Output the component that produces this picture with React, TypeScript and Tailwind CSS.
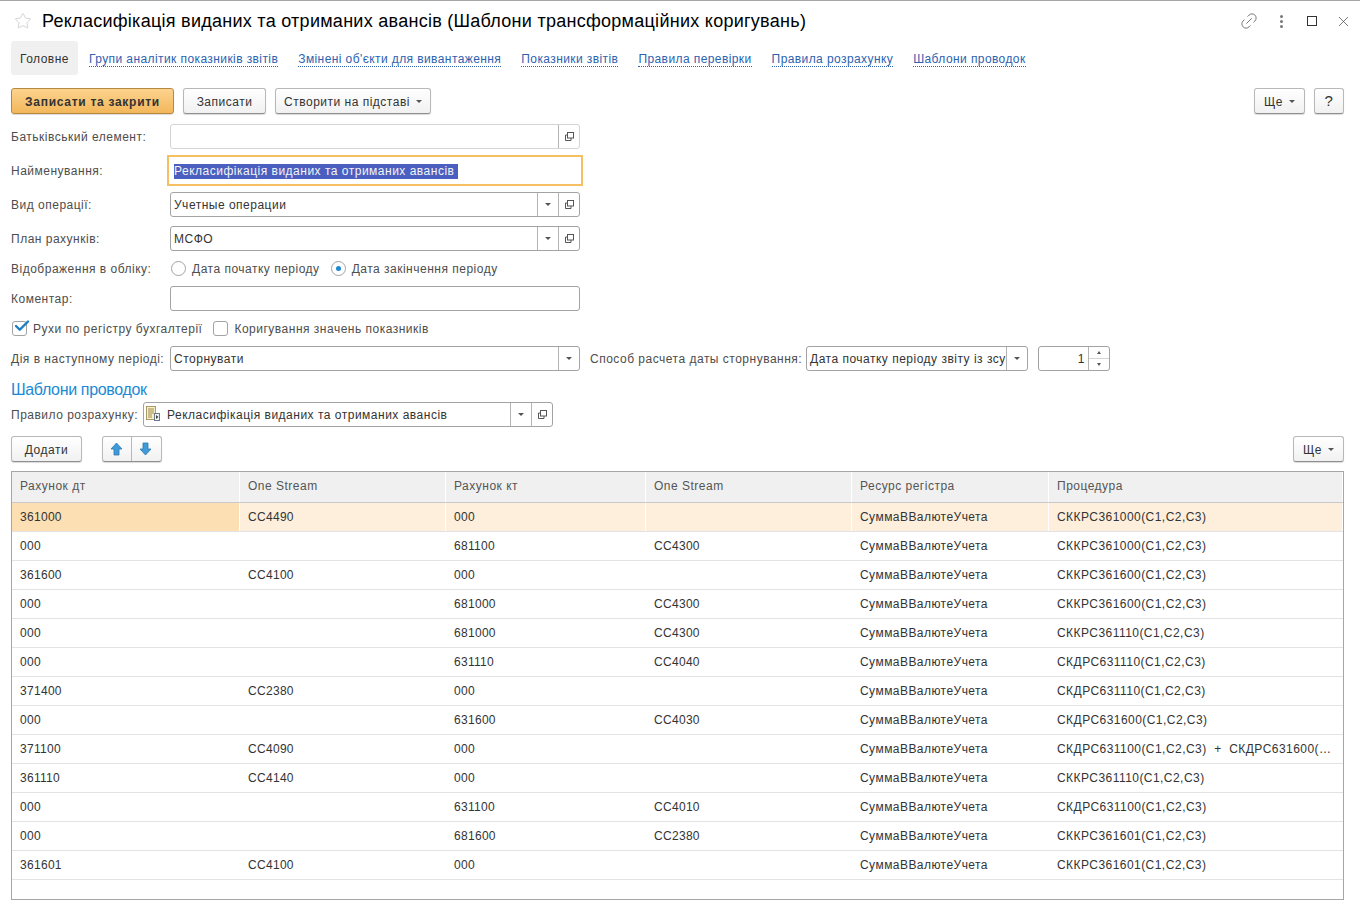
import React from "react";
import { Star, Link2, X, Check } from "lucide-react";

const rows = [
  ["361000", "CC4490", "000", "", "СуммаВВалютеУчета", "СККРС361000(C1,C2,C3)"],
  ["000", "", "681100", "CC4300", "СуммаВВалютеУчета", "СККРС361000(C1,C2,C3)"],
  ["361600", "CC4100", "000", "", "СуммаВВалютеУчета", "СККРС361600(C1,C2,C3)"],
  ["000", "", "681000", "CC4300", "СуммаВВалютеУчета", "СККРС361600(C1,C2,C3)"],
  ["000", "", "681000", "CC4300", "СуммаВВалютеУчета", "СККРС361110(C1,C2,C3)"],
  ["000", "", "631110", "CC4040", "СуммаВВалютеУчета", "СКДРС631110(C1,C2,C3)"],
  ["371400", "CC2380", "000", "", "СуммаВВалютеУчета", "СКДРС631110(C1,C2,C3)"],
  ["000", "", "631600", "CC4030", "СуммаВВалютеУчета", "СКДРС631600(C1,C2,C3)"],
  ["371100", "CC4090", "000", "", "СуммаВВалютеУчета", "СКДРС631100(C1,C2,C3)  +  СКДРС631600(C1,C2,C3)  +  СКДРС631100(C1,C2,C3)"],
  ["361110", "CC4140", "000", "", "СуммаВВалютеУчета", "СККРС361110(C1,C2,C3)"],
  ["000", "", "631100", "CC4010", "СуммаВВалютеУчета", "СКДРС631100(C1,C2,C3)"],
  ["000", "", "681600", "CC2380", "СуммаВВалютеУчета", "СККРС361601(C1,C2,C3)"],
  ["361601", "CC4100", "000", "", "СуммаВВалютеУчета", "СККРС361601(C1,C2,C3)"],
];

const headers = ["Рахунок дт", "One Stream", "Рахунок кт", "One Stream", "Ресурс регістра", "Процедура"];
const links = [
  "Групи аналітик показників звітів",
  "Змінені об'єкти для вивантаження",
  "Показники звітів",
  "Правила перевірки",
  "Правила розрахунку",
  "Шаблони проводок",
];

function OpenIcon() {
  return (
    <svg width="11" height="11" viewBox="0 0 11 11" fill="none" stroke="#555" strokeWidth="1">
      <rect x="3.5" y="1.5" width="6" height="5.5" />
      <path d="M3.5 4H1.5V9.5H7V7" />
    </svg>
  );
}

function Caret() {
  return <span className="w-0 h-0 border-x-[3px] border-x-transparent border-t-[3px] border-t-[#555]" />;
}

function FieldBtn({ kind }: { kind: "open" | "drop" }) {
  return (
    <span className="w-[21px] shrink-0 self-stretch flex items-center justify-center border-l border-[#b4b4b4]">
      {kind === "open" ? <OpenIcon /> : <Caret />}
    </span>
  );
}

function Field({
  width,
  text,
  drop,
  open,
  light,
}: {
  width: string;
  text?: string;
  drop?: boolean;
  open?: boolean;
  light?: boolean;
}) {
  return (
    <div className={`${width} h-[25px] flex items-stretch bg-white rounded-[3px] border ${light ? "border-[#d4d4d4]" : "border-[#a3a3a3]"}`}>
      <span className="flex-1 min-w-0 pl-[3px] leading-[25px] whitespace-nowrap overflow-hidden text-[#333]">{text}</span>
      {drop && <FieldBtn kind="drop" />}
      {open && <FieldBtn kind="open" />}
    </div>
  );
}

function Btn({ className, children }: { className: string; children: React.ReactNode }) {
  return (
    <button className={`h-[26px] pt-[1px] rounded-[3px] border border-[#b8b8b8] border-b-[#8f8f8f] bg-gradient-to-b from-white to-[#f1f1f1] shadow-[0_1px_1px_rgba(0,0,0,0.15)] flex items-center justify-center text-[#333] ${className}`}>
      {children}
    </button>
  );
}

function FormRow({ label, className, children }: { label: string; className: string; children: React.ReactNode }) {
  return (
    <div className={`flex items-center ${className}`}>
      <span className="w-[159px] shrink-0 text-[#4d4d4d] whitespace-nowrap">{label}</span>
      {children}
    </div>
  );
}

function ArrowBtn({ up }: { up?: boolean }) {
  return (
    <svg width="13" height="14" viewBox="0 0 13 14">
      <path
        d={up ? "M6.5 1L12 7H9V13H4V7H1Z" : "M6.5 13L12 7H9V1H4V7H1Z"}
        fill="#3f9ad8"
        stroke="#2a78b4"
        strokeWidth="0.8"
      />
    </svg>
  );
}

export default function App() {
  return (
    <div className="w-[1360px] h-[910px] bg-white overflow-hidden border-t border-[#a6a6a6] text-[12px] tracking-[0.5px] font-['Liberation_Sans',Arial,sans-serif]">
      <div className="h-[40px] flex items-center pl-[14px] pr-[8px]">
        <Star size={18} strokeWidth={1} className="text-[#c4c4c4] shrink-0" />
        <h1 className="ml-[10px] text-[18px] tracking-[0.27px] text-black whitespace-nowrap">
          Рекласифікація виданих та отриманих авансів (Шаблони трансформаційних коригувань)
        </h1>
        <div className="ml-auto flex items-center text-[#666]">
          <Link2 size={20} strokeWidth={1} className="-rotate-45" />
          <span className="ml-[21px] flex flex-col gap-[2px]">
            <span className="w-[3px] h-[3px] rounded-full bg-[#777]" />
            <span className="w-[3px] h-[3px] rounded-full bg-[#777]" />
            <span className="w-[3px] h-[3px] rounded-full bg-[#777]" />
          </span>
          <span className="w-[10px] h-[10px] ml-[24px] border border-[#333]" />
          <X size={17} strokeWidth={1} className="ml-[18px] text-[#444]" />
        </div>
      </div>

      <div className="h-[34px] ml-[11px] flex items-center">
        <span className="w-[67px] h-full pt-[2px] rounded-[3px] bg-[#f0f0f0] flex items-center justify-center text-[#333]">Головне</span>
        <div className="ml-[11px] pt-[4px] flex gap-[20px]">
          {links.map((l) => (
            <a key={l} className="text-[#2c62b0] tracking-[0.41px] whitespace-nowrap border-b border-dotted border-[#2c62b0] leading-[13px]">
              {l}
            </a>
          ))}
        </div>
      </div>

      <div className="mt-[13px] ml-[11px] mr-[16px] flex items-center">
        <button className="w-[163px] h-[26px] pt-[1px] rounded-[3px] border border-[#b5893f] bg-gradient-to-b from-[#fdd38e] to-[#f2b75a] shadow-[0_1px_1px_rgba(0,0,0,0.15)] font-bold tracking-[0.72px] text-[#333]">
          Записати та закрити
        </button>
        <Btn className="ml-[9px] w-[83px]">Записати</Btn>
        <Btn className="ml-[9px] w-[156px] gap-[6px]">
          Створити на підставі <Caret />
        </Btn>
        <Btn className="ml-auto w-[51px] gap-[6px]">
          Ще <Caret />
        </Btn>
        <Btn className="ml-[9px] w-[30px] text-[15px]">?</Btn>
      </div>

      <div className="ml-[11px]">
        <FormRow label="Батьківський елемент:" className="mt-[10px]">
          <Field width="w-[410px]" open light />
        </FormRow>
        <FormRow label="Найменування:" className="mt-[6px]">
          <div className="-ml-[3px] w-[416px] h-[31px] pt-[1px] border-2 border-[#f5c062] flex items-center pl-[5px]">
            <span className="bg-[#4a5fbf] text-[#f4f4f4] leading-[15px] pr-[4px] whitespace-nowrap">Рекласифікація виданих та отриманих авансів</span>
          </div>
        </FormRow>
        <FormRow label="Вид операції:" className="mt-[6px]">
          <Field width="w-[410px]" text="Учетные операции" drop open />
        </FormRow>
        <FormRow label="План рахунків:" className="mt-[9px]">
          <Field width="w-[410px]" text="МСФО" drop open />
        </FormRow>
        <FormRow label="Відображення в обліку:" className="mt-[8px] h-[18px] pt-[1px]">
          <span className="ml-[1px] -mt-[1px] w-[15px] h-[15px] rounded-full border border-[#a3a3a3] bg-white" />
          <span className="ml-[6px] text-[#4d4d4d] whitespace-nowrap">Дата початку періоду</span>
          <span className="ml-[11px] -mt-[1px] w-[15px] h-[15px] rounded-full border border-[#a3a3a3] bg-white flex items-center justify-center">
            <span className="w-[5px] h-[5px] rounded-full bg-[#1e88d2]" />
          </span>
          <span className="ml-[6px] text-[#4d4d4d] whitespace-nowrap">Дата закінчення періоду</span>
        </FormRow>
        <FormRow label="Коментар:" className="mt-[9px]">
          <Field width="w-[410px]" />
        </FormRow>

        <div className="mt-[8px] h-[18px] pt-[1px] flex items-center text-[#4d4d4d]">
          <span className="ml-[1px] -mt-[1px] w-[15px] h-[15px] rounded-[3px] border border-[#a3a3a3] bg-white relative">
            <Check size={18} strokeWidth={3.2} className="absolute -top-[5px] left-[0px] text-[#1a7fc4]" />
          </span>
          <span className="ml-[6px] whitespace-nowrap">Рухи по регістру бухгалтерії</span>
          <span className="ml-[11px] -mt-[1px] w-[15px] h-[15px] rounded-[3px] border border-[#a3a3a3] bg-white" />
          <span className="ml-[6px] whitespace-nowrap">Коригування значень показників</span>
        </div>

        <FormRow label="Дія в наступному періоді:" className="mt-[9px]">
          <Field width="w-[410px]" text="Сторнувати" drop />
          <span className="ml-[10px] w-[216px] shrink-0 text-[#4d4d4d] whitespace-nowrap">Способ расчета даты сторнування:</span>
          <Field width="w-[222px]" text="Дата початку періоду звіту із зсувом" drop />
          <div className="ml-[10px] w-[72px] h-[25px] flex items-stretch rounded-[3px] border border-[#a3a3a3]">
            <span className="flex-1 text-right pr-[3px] leading-[25px] text-[#333]">1</span>
            <span className="w-[21px] flex flex-col border-l border-[#b4b4b4]">
              <span className="flex-1 flex items-center justify-center border-b border-[#d4d4d4]">
                <span className="w-0 h-0 border-x-[2px] border-x-transparent border-b-[3px] border-b-[#555]" />
              </span>
              <span className="flex-1 flex items-center justify-center">
                <span className="w-0 h-0 border-x-[2px] border-x-transparent border-t-[3px] border-t-[#555]" />
              </span>
            </span>
          </div>
        </FormRow>

        <h2 className="mt-[10px] text-[16px] leading-[18px] tracking-[-0.35px] text-[#1a8ad4]">Шаблони проводок</h2>

        <div className="mt-[3px] flex items-center">
          <span className="w-[132px] shrink-0 text-[#4d4d4d] whitespace-nowrap">Правило розрахунку:</span>
          <div className="w-[410px] h-[25px] flex items-stretch rounded-[3px] border border-[#a3a3a3]">
            <svg width="16" height="17" viewBox="0 0 16 17" className="ml-[2px] mt-[3px] shrink-0">
              <rect x="0.5" y="0.5" width="9" height="13" fill="#f8efc8" stroke="#a89a60" />
              <path d="M2 3H8M2 5H8M2 7H8M2 9H6M2 11H6" stroke="#9a8c50" />
              <rect x="8.5" y="7.5" width="5" height="7" fill="#eef2f6" stroke="#6a7a8a" />
              <path d="M10 9L12.5 11L10 13Z" fill="#444" />
            </svg>
            <span className="flex-1 pl-[5px] leading-[25px] text-[#333] whitespace-nowrap overflow-hidden">Рекласифікація виданих та отриманих авансів</span>
            <FieldBtn kind="drop" />
            <FieldBtn kind="open" />
          </div>
        </div>

        <div className="mt-[9px] mr-[16px] flex items-center">
          <Btn className="w-[71px]">Додати</Btn>
          <div className="ml-[20px] w-[60px] h-[26px] flex rounded-[3px] border border-[#b8b8b8] border-b-[#8f8f8f] bg-gradient-to-b from-white to-[#f1f1f1] shadow-[0_1px_1px_rgba(0,0,0,0.15)]">
            <span className="w-[29px] pr-[1px] flex items-center justify-center border-r border-[#b8b8b8]">
              <ArrowBtn up />
            </span>
            <span className="flex-1 pr-[2px] flex items-center justify-center">
              <ArrowBtn />
            </span>
          </div>
          <Btn className="ml-auto w-[51px] gap-[6px]">
            Ще <Caret />
          </Btn>
        </div>

        <div className="mt-[9px] w-[1333px] h-[429px] border border-[#a6a6a6] overflow-hidden">
          <div className="grid grid-cols-[228px_206px_200px_206px_197px_294px] h-[31px] border-b border-[#c9c9c9]">
            {headers.map((h, i) => (
              <div key={i} className="bg-[#f0f0f0] border-r border-white pl-[8px] leading-[29px] text-[#555]">
                {h}
              </div>
            ))}
          </div>
          {rows.map((r, i) => (
            <div key={i} className={`grid grid-cols-[228px_206px_200px_206px_197px_294px] h-[29px] border-b border-[#e3e3e3] ${i === 0 ? "bg-[#feefdc]" : ""}`}>
              {r.map((c, j) => (
                <div
                  key={j}
                  className={`pl-[8px] pr-[8px] leading-[29px] text-[#333] whitespace-pre overflow-hidden text-ellipsis border-r ${j < 4 ? "tracking-[0.3px]" : "tracking-[0.45px]"} ${i === 0 ? "border-white" : "border-transparent"} ${i === 0 && j === 0 ? "bg-[#fcdfb3]" : ""}`}
                >
                  {c}
                </div>
              ))}
            </div>
          ))}
        </div>
      </div>
    </div>
  );
}
